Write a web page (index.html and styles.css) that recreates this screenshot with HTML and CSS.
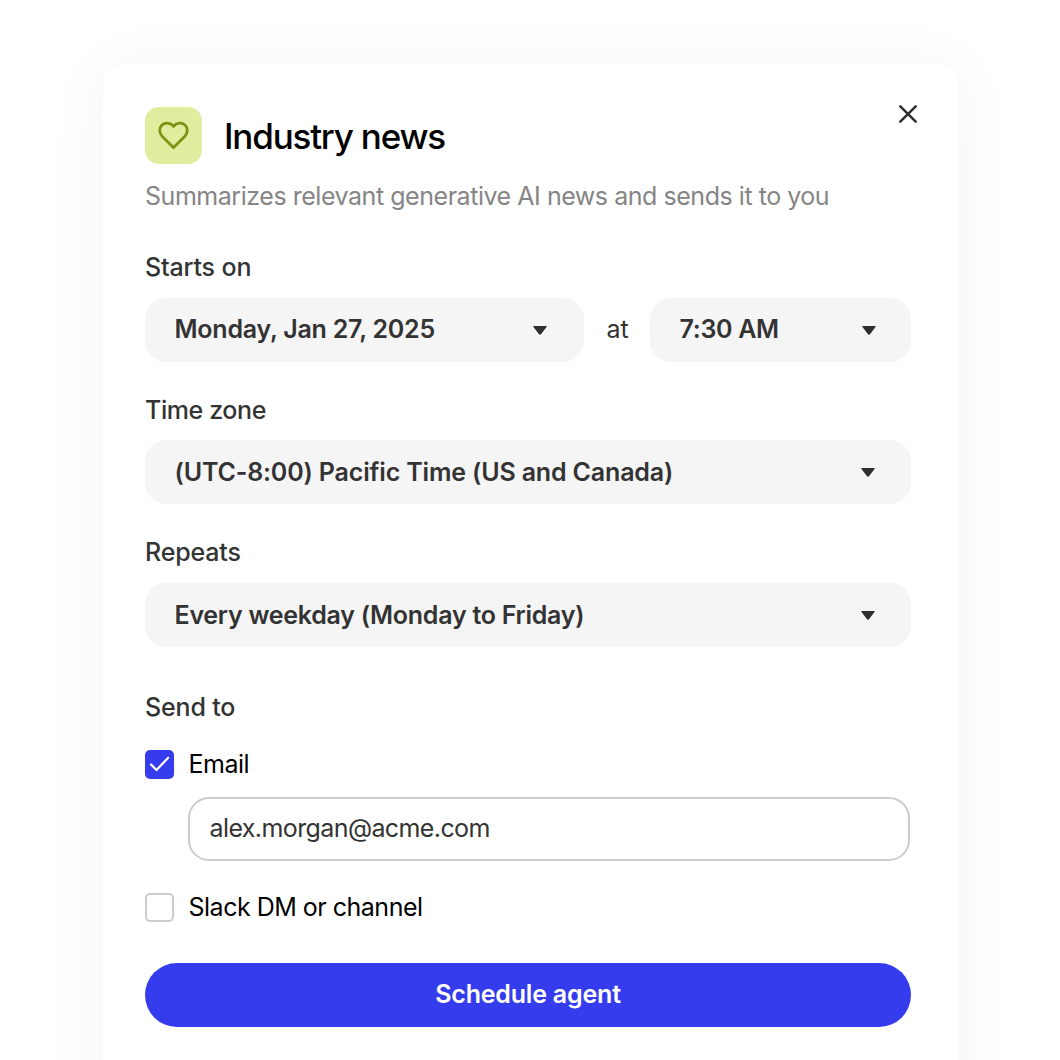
FILE: index.html
```html
<!DOCTYPE html>
<html lang="en">
<head>
    <meta charset="UTF-8">
    <title>Industry news</title>
    <meta name="viewport" content="width=device-width, initial-scale=1.0">
    <link rel="stylesheet" href="styles.css">
</head>
<body>
<div class="card">
    <header>
        <div class="badge">
            <svg width="57" height="57" viewBox="0 0 57 57" fill="none" stroke="#7c9214" stroke-width="2.8">
                <path d="M28.5 40.6 L17.3 29.4 C13.9 26 13.9 20.9 17 18 C20.2 15.2 25.2 15.5 28.5 19.2 C31.8 15.5 36.8 15.2 40 18 C43.1 20.9 43.1 26 39.7 29.4 Z"/>
            </svg>
        </div>
        <h1>Industry news</h1>
        <button class="close" aria-label="Close">
            <svg width="20" height="20" viewBox="0 0 20 20" fill="none" stroke="#2e2e2e" stroke-width="2.5" stroke-linecap="round">
                <path d="M2.3 2.3 L17.7 17.7 M17.7 2.3 L2.3 17.7"/>
            </svg>
        </button>
    </header>
    <p class="description">Summarizes relevant generative AI news and sends it to you</p>

    <div class="field">
        <div class="label">Starts on</div>
        <div class="row">
            <div class="select date">
                <span class="date-text">Monday, Jan 27, 2025</span>
                <svg class="arrow" width="16" height="11" viewBox="0 0 16 11"><path d="M2 1 H14 Q15.3 1 14.5 2.1 L9.2 9 Q8 10.4 6.8 9 L1.5 2.1 Q.7 1 2 1 Z"/></svg>
            </div>
            <span class="at">at</span>
            <div class="select time">
                <span class="time-text">7:30 AM</span>
                <svg class="arrow" width="16" height="11" viewBox="0 0 16 11"><path d="M2 1 H14 Q15.3 1 14.5 2.1 L9.2 9 Q8 10.4 6.8 9 L1.5 2.1 Q.7 1 2 1 Z"/></svg>
            </div>
        </div>
    </div>

    <div class="field">
        <div class="label zone">Time zone</div>
        <div class="select">
            <span class="zone-text">(UTC-8:00) Pacific Time (US and Canada)</span>
            <svg class="arrow" width="16" height="11" viewBox="0 0 16 11"><path d="M2 1 H14 Q15.3 1 14.5 2.1 L9.2 9 Q8 10.4 6.8 9 L1.5 2.1 Q.7 1 2 1 Z"/></svg>
        </div>
    </div>

    <div class="field">
        <div class="label">Repeats</div>
        <div class="select">
            <span class="repeat-text">Every weekday (Monday to Friday)</span>
            <svg class="arrow" width="16" height="11" viewBox="0 0 16 11"><path d="M2 1 H14 Q15.3 1 14.5 2.1 L9.2 9 Q8 10.4 6.8 9 L1.5 2.1 Q.7 1 2 1 Z"/></svg>
        </div>
    </div>

    <div class="send">
        <div class="label">Send to</div>
        <div class="option">
            <span class="checkbox checked">
                <svg width="29" height="29" viewBox="0 0 29 29" fill="none" stroke="#fff" stroke-width="2.2" stroke-linecap="round" stroke-linejoin="round">
                    <path d="M6 14.5 L11.5 20 L23.2 7.8"/>
                </svg>
            </span>
            <span>Email</span>
        </div>
        <div class="email">alex.morgan@acme.com</div>
        <div class="option">
            <span class="checkbox"></span>
            <span>Slack DM or channel</span>
        </div>
    </div>

    <button class="submit">Schedule agent</button>
</div>
</body>
</html>
```
FILE: styles.css
```css
body {
    background-color: #fff;
    color: #333;
    font-family: Inter, sans-serif;
    font-size: 25px;
    line-height: 30px;
    margin: 0;
    height: 1060px;
    overflow: hidden;
}
.card {
    box-sizing: border-box;
    width: 855px;
    height: 1100px;
    margin: 64px 0 0 102.5px;
    padding: 43px 46.5px 0 42.5px;
    border-radius: 22px;
    background-color: #fff;
    box-shadow: 0 4px 64px rgba(0, 0, 0, 0.05);
}
header {
    display: flex;
    align-items: center;
    height: 57px;
}
.badge {
    width: 57px;
    height: 57px;
    border-radius: 14px;
    background-color: #e0ed9e;
}
h1 {
    margin: 0 0 0 22px;
    color: #000;
    font-size: 35px;
    line-height: 42px;
    font-weight: 500;
    letter-spacing: -1.2px;
    white-space: nowrap;
}
.close {
    align-self: flex-start;
    display: flex;
    margin: -3px -6.5px 0 auto;
    padding: 0;
    border: none;
    background: none;
}
.description {
    margin: 16.5px 0 41.5px;
    color: #858585;
    letter-spacing: -0.46px;
    white-space: nowrap;
}
.field {
    height: 109.5px;
    margin-bottom: 33px;
}
.label {
    margin-bottom: 15.5px;
    font-weight: 500;
    letter-spacing: -0.15px;
}
.zone {
    letter-spacing: -0.4px;
}
.row {
    display: flex;
    align-items: center;
}
.select {
    box-sizing: border-box;
    display: flex;
    align-items: center;
    justify-content: space-between;
    height: 64px;
    padding: 0 35px 0 29.5px;
    border-radius: 21px;
    background-color: #f5f5f5;
    font-weight: 600;
    white-space: nowrap;
}
.date {
    width: 439px;
    padding-right: 36px;
}
.row span {
    margin-bottom: 1px;
}
.at {
    flex: 1;
    padding-left: 1px;
    text-align: center;
}
.time {
    width: 261px;
    padding-right: 34px;
}
.date-text {
    letter-spacing: -0.23px;
}
.time-text {
    letter-spacing: -0.3px;
}
.zone-text {
    letter-spacing: -0.16px;
}
.repeat-text {
    letter-spacing: -0.26px;
}
.arrow {
    margin-top: 1px;
    fill: #2e2e2e;
}
.send {
    padding-top: 12px;
}
.send .label {
    margin-bottom: 27px;
}
.option {
    display: flex;
    align-items: center;
    gap: 14.5px;
    height: 31px;
    color: #000;
    letter-spacing: -0.5px;
}
.checkbox {
    box-sizing: border-box;
    width: 29px;
    height: 29px;
    border: 2px solid #ccc;
    border-radius: 5px;
}
.checked {
    border: none;
    background-color: #343ced;
}
.checked svg {
    display: block;
}
.email {
    box-sizing: border-box;
    width: 722px;
    height: 64px;
    margin: 17px 0 31px 43px;
    padding: 14.5px 19.5px;
    border: 2px solid #ccc;
    border-radius: 21px;
    letter-spacing: -0.6px;
}
.submit {
    display: block;
    width: 766px;
    height: 64px;
    margin-top: 40px;
    padding: 0 0 2px;
    border: none;
    border-radius: 32px;
    background-color: #343ced;
    color: #fff;
    font: 600 25px Inter, sans-serif;
    letter-spacing: -0.2px;
}
```
